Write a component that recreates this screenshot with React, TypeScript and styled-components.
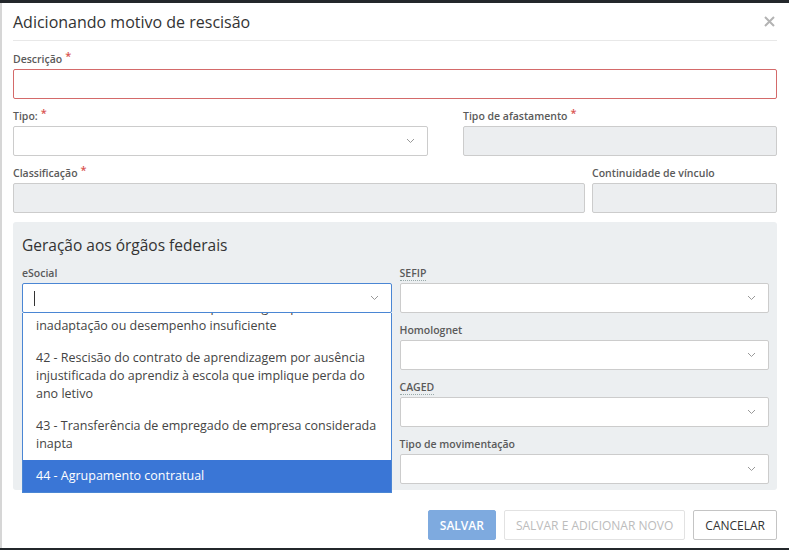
import { useLayoutEffect, useRef } from 'react';
import styled, { createGlobalStyle } from 'styled-components';

const GlobalStyle = createGlobalStyle`
 html, body {
  margin: 0;
  padding: 0;
  background: #23272b;
  font-family: 'Open Sans', 'Liberation Sans', sans-serif;
 }
 * {
  box-sizing: border-box;
 }
`;

const Modal = styled.div`
 margin-top: 3px;
 height: 545px;
 background: #fff;
 border-left: 2px solid #d6d6d6;
 padding: 0 12px 0 11px;
 display: flex;
 flex-direction: column;
`;

const Header = styled.header`
 display: flex;
 align-items: center;
 justify-content: space-between;
 height: 38px;
 border-bottom: 1px solid #e8e8e8;
`;

const Title = styled.h1`
 margin: 0;
 font-size: 16px;
 font-weight: 400;
 color: #333;
`;

const Close = styled.button`
 border: 0;
 background: none;
 padding: 0;
 margin-right: 2px;
 color: #b0b0b0;
 display: flex;
 cursor: pointer;
`;

const Body = styled.div`
 display: flex;
 flex-direction: column;
 gap: 10px;
 padding-top: 11px;
`;

const Row = styled.div<{ $cols: string; $gap: number }>`
 display: grid;
 grid-template-columns: ${({ $cols }) => $cols};
 column-gap: ${({ $gap }) => $gap}px;
`;

const Field = styled.div`
 display: flex;
 flex-direction: column;
 position: relative;
`;

const Label = styled.label<{ $hint?: boolean }>`
 align-self: flex-start;
 height: 15px;
 font-size: 10.5px;
 font-weight: 600;
 line-height: 15px;
 color: #5a5a5a;
 margin-bottom: 2px;
 ${({ $hint }) => ($hint ? 'border-bottom: 1px dotted #9aa; line-height: 14px;' : '')}
`;

const Required = styled.span`
 position: relative;
 top: -3px;
 color: #d9534f;
 font-size: 11px;
 margin-left: 3px;
 line-height: 0;
`;

const Input = styled.div<{ $state?: 'error' | 'disabled' | 'focus' }>`
 height: 30px;
 border: 1px solid
  ${({ $state }) =>
   $state === 'error' ? '#d46a6a' : $state === 'focus' ? '#4a86d4' : '#ccc'};
 border-radius: 2px;
 background: ${({ $state }) => ($state === 'disabled' ? '#eceef0' : '#fff')};
 display: flex;
 align-items: center;
 justify-content: space-between;
 padding: 0 12px 0 11px;
`;

const Caret = styled.span`
 width: 1px;
 height: 15px;
 background: #333;
`;

const Panel = styled.section`
 margin-top: -1px;
 background: #eceff1;
 border-radius: 3px;
 padding: 13px 8px 6px 9px;
`;

const PanelTitle = styled.h2`
 margin: 0 0 10px;
 font-size: 15.5px;
 font-weight: 400;
 line-height: 21px;
 color: #333;
`;

const PanelGrid = styled.div`
 display: grid;
 grid-template-columns: 1fr 1fr;
 column-gap: 8px;
 align-items: start;
`;

const Column = styled.div`
 display: flex;
 flex-direction: column;
 gap: 10px;
`;

const Menu = styled.ul`
 position: absolute;
 top: 100%;
 left: 0;
 right: 0;
 height: 180px;
 margin: 0;
 padding: 0;
 list-style: none;
 background: #fff;
 border: 1px solid #4a86d4;
 border-top: 0;
 overflow-y: scroll;
 z-index: 2;
 &::-webkit-scrollbar {
  width: 8px;
 }
 &::-webkit-scrollbar-track {
  background: #f4f4f4;
 }
 &::-webkit-scrollbar-thumb {
  background: #c9c9c9;
 }
`;

const Option = styled.li<{ $active?: boolean }>`
 padding: 7px 13px;
 font-size: 12.5px;
 line-height: 18px;
 color: ${({ $active }) => ($active ? '#fff' : '#444')};
 background: ${({ $active }) => ($active ? '#3a76d6' : 'transparent')};
`;

const Footer = styled.footer`
 display: flex;
 justify-content: flex-end;
 gap: 8px;
 margin-top: 20px;
`;

const Button = styled.button<{ $variant: 'primary' | 'ghost' | 'default' }>`
 height: 30px;
 padding: 0 11px;
 border-radius: 2px;
 font-family: inherit;
 font-size: 12px;
 text-transform: uppercase;
 border: 1px solid
  ${({ $variant }) =>
   $variant === 'primary' ? '#7eaadf' : $variant === 'ghost' ? '#e2e2e2' : '#c4c4c4'};
 background: ${({ $variant }) => ($variant === 'primary' ? '#7eaadf' : '#fff')};
 color: ${({ $variant }) =>
  $variant === 'primary' ? '#fff' : $variant === 'ghost' ? '#bcbcbc' : '#333'};
 font-weight: ${({ $variant }) => ($variant === 'primary' ? 600 : 400)};
`;

const Chevron = () => (
 <svg width="9" height="6" viewBox="0 0 9 6" fill="none">
  <polyline points="1,1 4.5,4.5 8,1" stroke="#999" strokeWidth="1" />
 </svg>
);

const options = [
 '39 - Extinção do contrato de trabalho intermitente',
 '40 - Rescisão antecipada do contrato de aprendizagem por falta disciplinar grave',
 '41 - Rescisão do contrato de aprendizagem por inadaptação ou desempenho insuficiente',
 '42 - Rescisão do contrato de aprendizagem por ausência injustificada do aprendiz à escola que implique perda do ano letivo',
 '43 - Transferência de empregado de empresa considerada inapta',
 '44 - Agrupamento contratual',
];

const Select = ({ label, hint }: { label: string; hint?: boolean }) => (
 <Field>
  <Label $hint={hint}>{label}</Label>
  <Input>
   <span />
   <Chevron />
  </Input>
 </Field>
);

export default function App() {
 const menuRef = useRef<HTMLUListElement>(null);

 useLayoutEffect(() => {
  if (menuRef.current) menuRef.current.scrollTop = menuRef.current.scrollHeight;
 }, []);

 return (
  <>
   <GlobalStyle />
   <Modal>
    <Header>
     <Title>Adicionando motivo de rescisão</Title>
     <Close aria-label="Fechar">
      <svg width="11" height="11" viewBox="0 0 11 11">
       <path d="M1 1L10 10M10 1L1 10" stroke="#b3b3b3" strokeWidth="2" />
      </svg>
     </Close>
    </Header>
    <Body>
     <Field>
      <Label>
       Descrição<Required>*</Required>
      </Label>
      <Input $state="error" />
     </Field>
     <Row $cols="415px 1fr" $gap={35}>
      <Field>
       <Label>
        Tipo:<Required>*</Required>
       </Label>
       <Input>
        <span />
        <Chevron />
       </Input>
      </Field>
      <Field>
       <Label>
        Tipo de afastamento<Required>*</Required>
       </Label>
       <Input $state="disabled" />
      </Field>
     </Row>
     <Row $cols="1fr 185px" $gap={7}>
      <Field>
       <Label>
        Classificação<Required>*</Required>
       </Label>
       <Input $state="disabled" />
      </Field>
      <Field>
       <Label>Continuidade de vínculo</Label>
       <Input $state="disabled" />
      </Field>
     </Row>
     <Panel>
      <PanelTitle>Geração aos órgãos federais</PanelTitle>
      <PanelGrid>
       <Column>
        <Field>
         <Label>eSocial</Label>
         <Input $state="focus">
          <Caret />
          <Chevron />
         </Input>
         <Menu ref={menuRef}>
          {options.map((o, i) => (
           <Option key={o} $active={i === options.length - 1}>
            {o}
           </Option>
          ))}
         </Menu>
        </Field>
       </Column>
       <Column>
        <Select label="SEFIP" hint />
        <Select label="Homolognet" />
        <Select label="CAGED" hint />
        <Select label="Tipo de movimentação" />
       </Column>
      </PanelGrid>
     </Panel>
    </Body>
    <Footer>
     <Button $variant="primary">Salvar</Button>
     <Button $variant="ghost">Salvar e adicionar novo</Button>
     <Button $variant="default">Cancelar</Button>
    </Footer>
   </Modal>
  </>
 );
}
